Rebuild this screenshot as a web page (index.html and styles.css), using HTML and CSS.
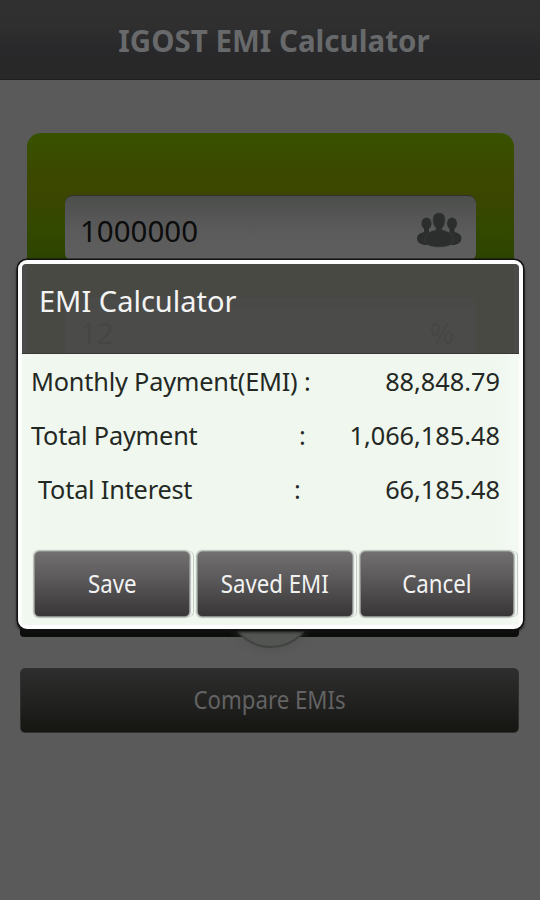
FILE: index.html
```
<!DOCTYPE html>
<html lang="en">
<head>
  <meta charset="UTF-8">
  <meta name="viewport" content="width=device-width, initial-scale=1.0">
  <title>IGOST EMI Calculator</title>
  <link rel="stylesheet" href="styles.css">
</head>

<body>

  <header>
    <h1>IGOST EMI Calculator</h1>
  </header>

  <main class="container">
    <div class="loan-form">
      <div class="field">
        <span>1000000</span>
        <svg class="people-icon" width="46" height="36" viewBox="0 0 46 36">
          <ellipse cx="10.5" cy="11.5" rx="5" ry="6"/>
          <ellipse cx="36" cy="11.5" rx="5" ry="6"/>
          <path d="M8 15h5v5c3 1 5 2 6 4v9H8c-4-1-7-3-7-7 0-3 3-5 7-6z"/>
          <path d="M38.500 15h-5v5c-3 1-5 2-6 4v9h11c4-1 7-3 7-7 0-3-3-5-7-6z"/>
          <path class="middle" d="M17 8c0-5 2-7 6-7s6 2 6 7c0 4-1 6-3 8v2c6 1 11 4 11 10 0 5-6 7-14 7S9 33 9 28c0-6 5-9 11-10v-2c-2-2-3-4-3-8z"/>
        </svg>
      </div>
      <div class="field">
        <span>12</span>
        <span class="percent">%</span>
      </div>
    </div>

    <div class="calculate-bar">
      <div class="dial"></div>
    </div>

    <button class="compare-btn"><span>Compare EMIs</span></button>
  </main>

  <!-- Result Dialog -->
  <div class="dialog">
    <div class="dialog-title"><h2>EMI Calculator</h2></div>
    <div class="dialog-body">
      <div class="row">
        <span class="label">Monthly Payment(EMI)</span>
        <span class="colon">:</span>
        <span class="amount">88,848.79</span>
      </div>
      <div class="row total">
        <span class="label">Total Payment</span>
        <span class="colon">:</span>
        <span class="amount">1,066,185.48</span>
      </div>
      <div class="row interest">
        <span class="label">Total Interest</span>
        <span class="colon">:</span>
        <span class="amount">66,185.48</span>
      </div>
      <div class="buttons">
        <button><span>Save</span></button>
        <button><span>Saved EMI</span></button>
        <button><span>Cancel</span></button>
      </div>
    </div>
  </div>

</body>

</html>
```

FILE: styles.css
```
/* General Styles */
* {
  box-sizing: border-box;
}

body {
  font-family: "Noto Sans", sans-serif;
  background-color: #5a5a5a;
  margin: 0;
  height: 900px;
  position: relative;
  overflow: hidden;
}

h1, h2 {
  margin: 0;
}

button {
  font-family: inherit;
  border: none;
  padding: 0 0 3px;
  cursor: pointer;
}

button span {
  display: inline-block;
  transform: scaleX(0.89);
}

header {
  height: 80px;
  display: flex;
  align-items: center;
  justify-content: center;
  background: linear-gradient(#303030, #302f30 35%, #29282a 60%, #282828);
  border-bottom: 1px solid #202020;
}

h1 {
  font-size: 29.5px;
  line-height: 40px;
  color: #67696a;
  padding: 3px 0 0 8px;
  white-space: nowrap;
}

/* Loan Form Styles */
.container {
  display: flex;
  flex-direction: column;
  padding: 53px 21px 0 20px;
}

.loan-form {
  height: 389px;
  margin: 0 5px 0 7px;
  padding: 62px 38px 0;
  border-radius: 14px;
  background: linear-gradient(#385200, #3b4900 38px, #3c4600 60px, #334900 95px, #2c4300 130px);
  display: flex;
  flex-direction: column;
  gap: 36px;
}

.field {
  height: 66px;
  padding: 3px 14px 0 15px;
  border-radius: 8px;
  border-top: 1px solid #30332c;
  background: linear-gradient(#4c4e4c, #5c5c5c 60%, #5e5e5e);
  display: flex;
  align-items: center;
  justify-content: space-between;
  font-size: 29.5px;
  color: #0c0c0c;
}

.people-icon {
  fill: #2c2e2d;
}

.people-icon .middle {
  stroke: #404241;
  stroke-width: 0.6;
}

.percent {
  padding-right: 8px;
  color: #101010;
}

.calculate-bar {
  height: 65px;
  margin-top: 50px;
  border-radius: 4px;
  background-color: #0c0e0c;
  position: relative;
}

.dial {
  position: absolute;
  left: 208px;
  bottom: -11px;
  width: 86px;
  height: 86px;
  border-radius: 50%;
  background-color: #535553;
  border: 2px solid #424442;
  box-shadow: 0 0 8px rgba(70, 72, 70, 0.6);
}

.compare-btn {
  height: 65px;
  margin-top: 31px;
  border-radius: 5px;
  background: linear-gradient(#2e2e2e, #222221 50%, #151512);
  border: 1px solid #30302f;
  font-size: 25px;
  color: #636363;
}

/* Dialog Styles */
.dialog {
  position: absolute;
  left: 18px;
  top: 260px;
  width: 505px;
  height: 369px;
  border: 4px solid #fcfdfc;
  border-radius: 9px;
  box-shadow: 0 0 0 1.5px #101110, 0 2px 3px 1px #101110;
  display: flex;
  flex-direction: column;
}

.dialog-title {
  height: 90px;
  padding: 16px 17px;
  border-radius: 4px 4px 0 0;
  background: rgba(74, 74, 72, 0.93);
  border-bottom: 1px solid #373937;
}

h2 {
  font-size: 29px;
  font-weight: normal;
  line-height: 42px;
  color: #f4f4f4;
  white-space: nowrap;
}

.dialog-body {
  flex: 1;
  padding: 0 4px 0 9px;
  background: linear-gradient(90deg, #f2f9f2, #eff7ee 20px, #eff7ee 470px, #f4f9f4);
}

.row {
  height: 54px;
  display: flex;
  align-items: center;
  padding-right: 15px;
  font-size: 25.3px;
  color: #242824;
  white-space: nowrap;
}

.label {
  width: 273px;
  letter-spacing: -0.2px;
}

.amount {
  margin-left: auto;
}

.total .label {
  width: 268px;
}

.interest {
  padding-left: 7px;
}

.interest .label {
  width: 256px;
}

.buttons {
  display: flex;
  margin: 35px 0 0 3px;
}

.buttons button {
  width: 156px;
  height: 66px;
  margin-right: 7px;
  border-radius: 5px;
  border: 1px solid #8d8f8d;
  background: linear-gradient(#716f70, #5c5a5b 40%, #383637);
  box-shadow: 0 0 1px 1px #b8bcb8, 3px 0 0 #f4f8f4, 4px 0 0 #c4ccc4;
  font-size: 25px;
  color: #f2f2f2;
  flex-shrink: 0;
}

.buttons button:last-child {
  width: 154px;
  margin-right: 0;
}
```
